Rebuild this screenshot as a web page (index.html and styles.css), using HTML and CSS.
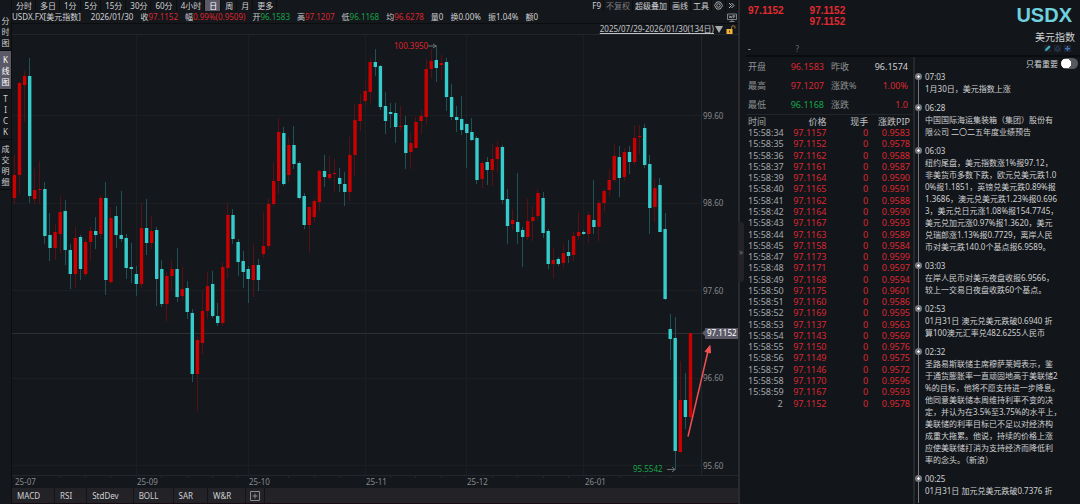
FILE: index.html
```html
<!DOCTYPE html>
<html lang="zh-CN">
<head>
    <meta charset="UTF-8">
    <meta name="viewport" content="width=device-width, initial-scale=1.0">
    <title>USDX 美元指数</title>
    <link rel="stylesheet" href="styles.css">
</head>
<body>
<div class="terminal">

    <nav class="sidebar">
        <button type="button">分<br>时<br>图</button>
        <button type="button" class="active">K<br>线<br>图</button>
        <button type="button">T<br>I<br>C<br>K</button>
        <button type="button">成<br>交<br>明<br>细</button>
    </nav>

    <main class="main">
        <div class="toolbar">
            <div class="periods">
                <button type="button">分时</button>
                <button type="button">多日</button>
                <button type="button">1分</button>
                <button type="button">5分</button>
                <button type="button">15分</button>
                <button type="button">30分</button>
                <button type="button">60分</button>
                <button type="button">4小时</button>
                <button type="button" class="active">日</button>
                <button type="button">周</button>
                <button type="button">月</button>
                <button type="button">更多</button>
            </div>
            <div class="tools">
                <button type="button">F9</button>
                <button type="button" class="muted">不复权</button>
                <button type="button">超级叠加</button>
                <button type="button">画线</button>
                <button type="button">工具</button>
                <button type="button" class="icon" aria-label="设置">
                    <svg width="9" height="9" viewBox="0 0 18 18" fill="none" stroke="#b4b4b6" stroke-width="1.8"><path d="M5.5 2h7L17 9l-4.5 7h-7L1 9z"/><circle cx="9" cy="9" r="3.5"/></svg>
                </button>
                <button type="button" class="icon" aria-label="展开">
                    <svg width="7" height="7" viewBox="0 0 14 14" fill="none" stroke="#c8c8ca" stroke-width="1.8"><path d="M2 2l5 5-5 5M7 2l5 5-5 5"/></svg>
                </button>
            </div>
        </div>

        <div class="info">
            <span class="symbol">USDX.FX[美元指数]</span>
            <span class="day">2026/01/30</span>
            <span>收<b class="red">97.1152</b></span>
            <span>幅<b class="red">0.99%(0.9509)</b></span>
            <span>开<b class="green">96.1583</b></span>
            <span>高<b class="red">97.1207</b></span>
            <span>低<b class="green">96.1168</b></span>
            <span>均<b class="red">96.6278</b></span>
            <span>量0</span>
            <span>换0.00%</span>
            <span>振1.04%</span>
            <span>额0</span>
            <svg class="monitor" width="10" height="9" viewBox="0 0 20 18" fill="none" stroke="#a5a5a8" stroke-width="1.5"><path d="M1 2h18v11H1zM10 13v3M5 17h10M4 5l2 5 1.500-4L9 10l1.500-5M12.500 11V5h3v3h-3"/></svg>
        </div>

        <div class="range">
            <a href="#">2025/07/29-2026/01/30(134日)</a>
            <svg width="8" height="7" viewBox="0 0 8 7"><path d="M0 0h8L4 7z" fill="#a9a9ab"/></svg>
            <svg class="lock" width="10" height="9" viewBox="0 0 20 18"><path d="M1 8h12v10H1z" fill="#f0b43c"/><path d="M11 8V5a3.500 3.500 0 0 1 7 0v2" fill="none" stroke="#c08c32" stroke-width="1.8"/><path d="M7 11v4" stroke="#5c3d0c" stroke-width="2"/></svg>
        </div>

        <svg class="chart" id="chart" viewBox="12 34 726 454" role="img" aria-label="美元指数日K线">
            <g class="grid">
                <path d="M136.500 35V475M248.500 35V475M365.500 35V475M466.500 35V475M583.500 35V475"/>
                <path d="M12 115.500H701M12 203.500H701M12 290.500H701M12 378.500H701M12 465.500H701"/>
            </g>
            <path class="frame" d="M12 34.500H738M701.500 35V475M12 475.500H738"/>
            <path class="frame" d="M14.500 476v2M59.500 476v2M85.500 476v2M110.500 476v2M161.500 476v2M187.500 476v2M212.500 476v2M237.500 476v2M288.500 476v2M314.500 476v2M339.500 476v2M390.500 476v2M415.500 476v2M441.500 476v2M492.500 476v2M517.500 476v2M543.500 476v2M568.500 476v2M619.500 476v2M644.500 476v2M670.500 476v2"/>
            <path class="last" d="M12 333.500H704"/>
            <g id="candles"></g>

            <g class="axis">
                <text x="703" y="119">99.60</text>
                <text x="703" y="206">98.60</text>
                <text x="703" y="294">97.60</text>
                <text x="703" y="381">96.60</text>
                <text x="703" y="469">95.60</text>
                <text x="15" y="485">25-07</text>
                <text x="137" y="485">25-09</text>
                <text x="249" y="485">25-10</text>
                <text x="366" y="485">25-11</text>
                <text x="467" y="485">25-12</text>
                <text x="585" y="485">26-01</text>
            </g>

            <text class="high" x="394" y="49">100.3950</text>
            <path class="pointer" d="M428 46h8M433 44l3 2-3 2"/>
            <text class="low" x="633" y="472">95.5542</text>
            <path class="pointer" d="M667 469.500h8M672 467l3 2.500-3 2.500"/>

            <path class="tag" d="M702 333l3-3v-2h33v11h-33v-3z"/>
            <text class="tag-text" x="707" y="336">97.1152</text>

            <path class="arrow" d="M688 436.500L708.500 349"/>
            <path class="arrow-head" d="M710 345.500l.5 7.500-5.500-1.500z"/>
        </svg>

        <div class="indicators">
            <button type="button">MACD</button>
            <button type="button">RSI</button>
            <button type="button">StdDev</button>
            <button type="button">BOLL</button>
            <button type="button">SAR</button>
            <button type="button">W&amp;R</button>
            <button type="button" class="add" aria-label="添加指标">
                <svg width="10" height="10" viewBox="0 0 10 10" fill="none" stroke="#8c8c90"><path d="M.5.5h9v9h-9zM5 2.500v5M2.500 5h5"/></svg>
            </button>
        </div>
    </main>

    <aside class="side">
        <button type="button" class="handle" aria-label="收起">»</button>
        <header class="head">
            <div class="prices">
                <strong>97.1152</strong>
                <strong>97.1152<br>97.1152</strong>
            </div>
            <div class="name">
                <h1>USDX</h1>
                <h2>美元指数</h2>
                <div class="marks">
                    <svg width="7" height="7" viewBox="0 0 14 14"><path d="M0 0h14v14H0z" fill="#1d2429"/><path d="M2 12l1-4 7-7 3 3-7 7z" fill="#3fb4cb"/></svg>
                    <svg width="7" height="7" viewBox="0 0 14 14" fill="none" stroke="#34527e" stroke-width="1.5"><path d="M1 1h12v12H1z" stroke="#252b33"/><path d="M3 10c2-2 0-7 4-7s2 5 4 7zM6 12h2"/></svg>
                    <svg width="7" height="7" viewBox="0 0 14 14"><path d="M0 0h14v14H0z" fill="#1c2533"/><path d="M7 2v10M2 7h10" stroke="#3f73bd" stroke-width="2.500"/></svg>
                </div>
            </div>
            <div class="hint"><span>-</span><span class="q">?</span></div>
        </header>

        <div class="columns">
            <section class="quotes">
                <dl class="summary">
                    <dt>开盘</dt><dd class="red">96.1583</dd><dt>昨收</dt><dd>96.1574</dd>
                    <dt>最高</dt><dd class="red">97.1207</dd><dt>涨跌%</dt><dd class="red">1.00%</dd>
                    <dt>最低</dt><dd class="green">96.1168</dd><dt>涨跌</dt><dd class="red">1.0</dd>
                </dl>
                <table class="ticks">
                    <thead>
                        <tr><th>时间</th><th>价格</th><th>现手</th><th>涨跌PIP</th></tr>
                    </thead>
                    <tbody>
                        <tr><td>15:58:34</td><td>97.1157</td><td>0</td><td>0.9583</td></tr>
                        <tr><td>15:58:35</td><td>97.1152</td><td>0</td><td>0.9578</td></tr>
                        <tr><td>15:58:36</td><td>97.1162</td><td>0</td><td>0.9588</td></tr>
                        <tr><td>15:58:37</td><td>97.1161</td><td>0</td><td>0.9587</td></tr>
                        <tr><td>15:58:39</td><td>97.1164</td><td>0</td><td>0.9590</td></tr>
                        <tr><td>15:58:40</td><td>97.1165</td><td>0</td><td>0.9591</td></tr>
                        <tr><td>15:58:41</td><td>97.1162</td><td>0</td><td>0.9588</td></tr>
                        <tr><td>15:58:42</td><td>97.1164</td><td>0</td><td>0.9590</td></tr>
                        <tr><td>15:58:43</td><td>97.1167</td><td>0</td><td>0.9593</td></tr>
                        <tr><td>15:58:44</td><td>97.1163</td><td>0</td><td>0.9589</td></tr>
                        <tr><td>15:58:45</td><td>97.1158</td><td>0</td><td>0.9584</td></tr>
                        <tr><td>15:58:47</td><td>97.1173</td><td>0</td><td>0.9599</td></tr>
                        <tr><td>15:58:48</td><td>97.1171</td><td>0</td><td>0.9597</td></tr>
                        <tr><td>15:58:49</td><td>97.1168</td><td>0</td><td>0.9594</td></tr>
                        <tr><td>15:58:50</td><td>97.1175</td><td>0</td><td>0.9601</td></tr>
                        <tr><td>15:58:51</td><td>97.1160</td><td>0</td><td>0.9586</td></tr>
                        <tr><td>15:58:52</td><td>97.1169</td><td>0</td><td>0.9595</td></tr>
                        <tr><td>15:58:53</td><td>97.1137</td><td>0</td><td>0.9563</td></tr>
                        <tr><td>15:58:54</td><td>97.1143</td><td>0</td><td>0.9569</td></tr>
                        <tr><td>15:58:55</td><td>97.1150</td><td>0</td><td>0.9576</td></tr>
                        <tr><td>15:58:56</td><td>97.1149</td><td>0</td><td>0.9575</td></tr>
                        <tr><td>15:58:57</td><td>97.1146</td><td>0</td><td>0.9572</td></tr>
                        <tr><td>15:58:58</td><td>97.1170</td><td>0</td><td>0.9596</td></tr>
                        <tr><td>15:58:59</td><td>97.1167</td><td>0</td><td>0.9593</td></tr>
                        <tr><td class="count">2</td><td>97.1152</td><td>0</td><td>0.9578</td></tr>
                    </tbody>
                </table>
            </section>

            <section class="news">
                <label class="filter">只看重要 <input type="checkbox"></label>
                <ol>
                    <li><time>07:03</time><p>1月30日，美元指数上涨</p></li>
                    <li><time>06:28</time><p>中国国际海运集装箱（集团）股份有<br>限公司 二〇二五年度业绩预告</p></li>
                    <li><time>06:03</time><p>纽约尾盘，美元指数涨1%报97.12，<br>非美货币多数下跌，欧元兑美元跌1.0<br>0%报1.1851，英镑兑美元跌0.89%报<br>1.3686，澳元兑美元跌1.23%报0.696<br>3，美元兑日元涨1.08%报154.7745，<br>美元兑加元涨0.97%报1.3620，美元<br>兑瑞郎涨1.13%报0.7729，离岸人民<br>币对美元跌140.0个基点报6.9589。</p></li>
                    <li><time>03:03</time><p>在岸人民币对美元夜盘收报6.9566，<br>较上一交易日夜盘收跌60个基点。</p></li>
                    <li><time>02:53</time><p>01月31日 澳元兑美元跌破0.6940 折<br>算100澳元汇率兑482.6255人民币</p></li>
                    <li><time>02:32</time><p>圣路易斯联储主席穆萨莱姆表示，鉴<br>于通货膨胀率一直顽固地高于美联储2<br>%的目标，他将不愿支持进一步降息。<br>他同意美联储本周维持利率不变的决<br>定，并认为在3.5%至3.75%的水平上，<br>美联储的利率目标已不足以对经济构<br>成重大拖累。他说，持续的价格上涨<br>应使美联储打消为支持经济而降低利<br>率的念头。（新浪）</p></li>
                    <li><time>00:25</time><p>01月31日 加元兑美元跌破0.7376 折</p></li>
                </ol>
            </section>
        </div>
    </aside>
</div>
<script src="chart.js"></script>
</body>
</html>
```
FILE: styles.css
```css
*, *::before {
    box-sizing: border-box;
}
body {
    margin: 0;
    background: #14171b;
    color: #cfd0d2;
    font-family: "Noto Sans", "Noto Sans CJK SC", sans-serif;
    font-size: 8px;
    line-height: 12px;
}
button {
    margin: 0;
    padding: 0;
    border: 0;
    background: none;
    color: inherit;
    font: inherit;
    cursor: pointer;
}
h1, h2, p, ol, dl, dd {
    margin: 0;
    padding: 0;
}
b {
    font-weight: normal;
}
.red {
    color: #dc2630;
}
.green {
    color: #17a34a;
}
.terminal {
    display: flex;
    height: 100vh;
    overflow: hidden;
}

/* left tabs */
.sidebar {
    flex: none;
    width: 12px;
    padding-top: 12px;
    border-right: 1px solid #0b0d0f;
}
.sidebar button {
    display: block;
    width: 100%;
    padding: 3px 0 2px;
    border-bottom: 1px solid #090b0d;
    line-height: 11px;
    text-align: center;
}
.sidebar .active {
    background: #5b5967;
    color: #fff;
}

/* chart column */
.main {
    flex: 1;
    min-width: 0;
    display: flex;
    flex-direction: column;
}
.toolbar {
    display: flex;
    justify-content: space-between;
    height: 11px;
    line-height: 11px;
}
.periods, .tools {
    display: flex;
}
.periods button, .tools button {
    padding: 0 3px 0 4px;
    border-right: 1px solid #0b0d0f;
    white-space: nowrap;
}
.periods .active {
    background: #5b5967;
    color: #fff;
}
.tools button {
    padding: 0 2px;
}
.tools .muted {
    color: #7d7e81;
}
.tools .icon {
    display: flex;
    align-items: center;
    padding: 0 2px;
}
.info {
    display: flex;
    gap: 7px;
    height: 13px;
    border-bottom: 1px solid #0b0d0f;
    white-space: nowrap;
}
.day {
    margin-left: 3px;
}
.monitor {
    margin: 2px 1px 0 auto;
}
.range {
    display: flex;
    align-items: center;
    justify-content: flex-end;
    gap: 1px;
    height: 10px;
    padding-right: 2px;
}
.range a {
    color: #c3c4c6;
}
.range .lock {
    margin-left: 2px;
}
.chart {
    flex: 1;
    display: block;
    width: 100%;
    min-height: 0;
}
.chart text {
    font-size: 8px;
}
.grid {
    stroke: #1b1f23;
    fill: none;
}
.frame {
    stroke: #23272b;
    fill: none;
}
.last {
    stroke: #2c3031;
}
.axis {
    fill: #87898c;
}
.high {
    fill: #dc2630;
}
.low {
    fill: #17a34a;
}
.pointer {
    stroke: #6e7174;
    fill: none;
}
.tag {
    fill: #5b5967;
}
.tag-text {
    fill: #fff;
}
.arrow {
    stroke: #f25050;
    stroke-width: 1.5;
}
.arrow-head {
    fill: #f25050;
    stroke: #f25050;
}
.up .body {
    fill: #cb0000;
}
.up .wick {
    fill: #5a1013;
}
.down .body {
    fill: #36cccb;
}
.down .wick {
    fill: #1e5254;
}
.indicators {
    display: flex;
    height: 16px;
    background: #222227;
    border-bottom: 1px solid #150d12;
}
.indicators button {
    padding: 0 14px 0 5px;
    border-right: 1px solid #141418;
    line-height: 15px;
}
.indicators .add {
    display: flex;
    align-items: center;
    padding: 0 4px;
}

/* right column */
.side {
    position: relative;
    flex: none;
    width: 342px;
    display: flex;
    flex-direction: column;
    border-left: 2px solid #2b2a2e;
    background: #12161a;
}
.handle {
    position: absolute;
    left: -2px;
    top: 222px;
    width: 6px;
    height: 60px;
    border-radius: 0 3px 3px 0;
    background: #222227;
    color: #77787b;
}
.head {
    display: grid;
    grid-template-columns: 1fr auto;
    height: 57px;
    margin-left: 6px;
    padding: 5px 5px 0 2px;
    border-bottom: 2px solid #0a0c0e;
}
.prices {
    display: flex;
    gap: 26px;
    color: #e02a30;
    font: bold 10px/11px "Liberation Sans", Arial, sans-serif;
}
.name {
    grid-row: span 2;
    text-align: right;
}
.name h1 {
    margin-right: 3px;
    color: #6fd0df;
    font: bold 20px/20px "Liberation Sans", Arial, sans-serif;
}
.name h2 {
    margin-top: 5px;
    font-size: 10px;
    font-weight: normal;
    line-height: 14px;
}
.marks {
    display: flex;
    justify-content: flex-end;
    gap: 3px;
    margin: 0 4px;
    padding-top: 1px;
}
.hint {
    display: flex;
    gap: 45px;
    align-self: end;
}
.q {
    color: #6c6e71;
}
.columns {
    flex: 1;
    min-height: 0;
    display: flex;
}
.quotes {
    width: 173px;
    padding-left: 6px;
}
.summary {
    display: grid;
    grid-template-columns: 24px 52px 40px 1fr;
    padding: 1px 5px 0 2px;
    border-bottom: 1px solid #22262a;
    font-size: 9px;
    line-height: 18px;
    row-gap: 1px;
}
.summary dt {
    color: #8f9194;
}
.summary dt:nth-of-type(even) {
    padding-left: 7px;
}
.summary dd {
    text-align: right;
}
.ticks {
    width: 100%;
    height: 294px;
    border-collapse: collapse;
    table-layout: fixed;
    font-size: 9px;
    line-height: 11px;
}
.ticks th, .ticks td {
    padding: 0 3px 0 0;
    color: #dc2630;
    font-weight: normal;
    text-align: right;
}
.ticks th {
    height: 12px;
    padding-top: 1px;
    color: #c3c4c6;
}
.ticks th:first-child, .ticks td:first-child {
    padding-left: 2px;
    color: #a5a7aa;
    text-align: left;
}
.ticks .count:first-child {
    padding-right: 5px;
    text-align: right;
}
.news {
    flex: 1;
    min-width: 0;
    padding-left: 3px;
    border-left: 2px solid #25282c;
    overflow: hidden;
}
.filter {
    display: flex;
    align-items: center;
    justify-content: flex-end;
    gap: 3px;
    height: 13px;
    padding-right: 2px;
}
.filter input {
    appearance: none;
    width: 17px;
    height: 11px;
    margin: 0;
    border-radius: 6px;
    background: radial-gradient(circle at 5px 50%, #fff 5px, #58595c 5px);
}
.news ol {
    list-style: none;
}
.news li {
    position: relative;
    padding: 1px 0 6px 6px;
    border-left: 1px solid #75777a;
}
.news li:first-child {
    border-image: linear-gradient(transparent 7px, #75777a 7px) 1;
}
/* timeline dot */
.news li::before {
    content: "";
    position: absolute;
    left: -4px;
    top: 3px;
    width: 7px;
    height: 7px;
    border: 2px solid #77797c;
    border-radius: 50%;
    background: #fff;
    background-clip: padding-box;
}
.news time {
    display: block;
}
.news p {
    white-space: nowrap;
}
```
FILE: chart.js
```js
// [direction, high, body top, body bottom, low], one row per trading day
const candles = [
    ['u', 155, 175, 198, 204], ['u', 82, 83, 175, 194], ['u', 71, 76, 85, 122], ['d', 58, 76, 196, 203],
    ['u', 169, 190, 199, 204], ['u', 161, 189, 190, 204], ['d', 182, 189, 236, 244], ['d', 213, 235, 248, 261],
    ['u', 224, 232, 248, 260], ['u', 196, 212, 234, 253], ['d', 200, 211, 250, 265], ['d', 244, 250, 274, 289],
    ['u', 227, 238, 274, 288], ['d', 235, 237, 269, 280], ['u', 239, 242, 274, 276], ['u', 227, 231, 242, 261],
    ['d', 217, 231, 235, 249], ['u', 195, 198, 234, 239], ['d', 182, 198, 280, 295], ['u', 207, 218, 282, 284],
    ['d', 206, 216, 235, 248], ['d', 191, 235, 239, 242], ['d', 234, 238, 268, 279], ['d', 243, 267, 269, 283],
    ['d', 266, 274, 284, 296], ['u', 203, 228, 284, 288], ['d', 199, 228, 243, 255], ['u', 216, 231, 243, 249],
    ['d', 227, 230, 279, 306], ['d', 260, 269, 304, 307], ['u', 272, 276, 304, 321], ['u', 260, 269, 276, 291],
    ['d', 248, 269, 297, 302], ['u', 267, 289, 296, 300], ['d', 281, 288, 312, 319], ['d', 309, 313, 374, 382],
    ['u', 337, 340, 374, 411], ['u', 290, 311, 343, 354], ['u', 272, 286, 311, 319], ['d', 271, 284, 316, 318],
    ['d', 303, 316, 323, 326], ['u', 262, 267, 323, 326], ['u', 203, 215, 268, 278], ['d', 209, 215, 239, 244],
    ['d', 239, 242, 262, 276], ['d', 251, 261, 272, 288], ['d', 266, 269, 279, 303], ['u', 244, 265, 280, 297],
    ['d', 259, 265, 280, 291], ['u', 212, 246, 254, 258], ['u', 198, 204, 246, 249], ['u', 163, 181, 204, 206],
    ['u', 118, 132, 181, 194], ['d', 127, 133, 184, 186], ['u', 137, 145, 175, 182], ['d', 126, 145, 164, 169],
    ['d', 161, 163, 198, 199], ['d', 193, 196, 225, 229], ['u', 207, 207, 225, 253], ['u', 199, 201, 217, 222],
    ['u', 170, 171, 202, 211], ['d', 155, 171, 177, 187], ['u', 156, 174, 178, 180], ['u', 159, 173, 174, 192],
    ['d', 168, 178, 184, 192], ['d', 172, 184, 192, 206], ['u', 137, 155, 192, 201], ['u', 104, 120, 155, 176],
    ['u', 94, 104, 121, 131], ['u', 81, 91, 101, 106], ['u', 58, 62, 92, 103], ['d', 49, 62, 67, 76],
    ['d', 65, 66, 107, 110], ['d', 92, 106, 121, 134], ['d', 103, 112, 114, 128], ['d', 103, 113, 127, 143],
    ['u', 106, 126, 127, 131], ['d', 116, 125, 153, 169], ['u', 133, 143, 152, 169], ['u', 117, 122, 148, 148],
    ['u', 110, 116, 121, 134], ['u', 59, 69, 117, 125], ['u', 49, 61, 69, 78], ['d', 45, 60, 68, 82],
    ['u', 55, 63, 65, 80], ['d', 58, 62, 97, 111], ['d', 84, 97, 117, 120], ['d', 106, 117, 120, 132],
    ['d', 96, 119, 130, 135], ['d', 123, 124, 133, 168], ['d', 118, 132, 140, 141], ['d', 136, 138, 180, 184],
    ['u', 161, 163, 179, 188], ['d', 157, 162, 170, 185], ['u', 144, 159, 170, 186], ['u', 141, 147, 159, 172],
    ['d', 145, 147, 200, 204], ['d', 189, 199, 226, 244], ['u', 209, 220, 224, 230], ['d', 173, 222, 232, 244],
    ['d', 227, 230, 237, 267], ['u', 199, 221, 237, 240], ['u', 206, 217, 221, 241], ['u', 189, 193, 216, 220],
    ['d', 192, 198, 233, 238], ['d', 229, 231, 264, 269], ['u', 248, 260, 264, 278], ['d', 257, 259, 264, 266],
    ['u', 244, 253, 263, 268], ['d', 240, 252, 256, 263], ['u', 232, 236, 255, 261], ['u', 212, 232, 236, 240],
    ['d', 230, 232, 234, 235], ['u', 212, 215, 234, 243], ['d', 180, 220, 227, 234], ['u', 200, 203, 227, 241],
    ['u', 189, 191, 203, 212], ['u', 169, 180, 190, 196], ['u', 144, 156, 180, 182], ['d', 146, 157, 178, 197],
    ['u', 148, 152, 177, 181], ['d', 146, 152, 162, 174], ['u', 125, 138, 162, 165], ['u', 125, 136, 137, 154],
    ['d', 124, 128, 165, 168], ['d', 155, 164, 208, 234], ['u', 179, 188, 207, 222], ['d', 178, 185, 232, 232],
    ['d', 213, 229, 299, 300], ['d', 314, 329, 339, 360], ['d', 317, 338, 451, 470], ['u', 361, 400, 452, 453],
    ['d', 373, 400, 417, 429], ['u', 333, 333, 417, 420]
];

const firstX = 14.4;
const lastX = 690.5;
const step = (lastX - firstX) / (candles.length - 1);
const svgNs = 'http://www.w3.org/2000/svg';
const layer = document.getElementById('candles');

function addRect(parent, name, x, y, width, height) {
    const rect = document.createElementNS(svgNs, 'rect');
    rect.setAttribute('class', name);
    rect.setAttribute('x', x);
    rect.setAttribute('y', y);
    rect.setAttribute('width', width);
    rect.setAttribute('height', height);
    parent.appendChild(rect);
}

candles.forEach(([direction, high, top, bottom, low], i) => {
    const x = firstX + i * step;
    const group = document.createElementNS(svgNs, 'g');
    group.setAttribute('class', direction === 'u' ? 'up' : 'down');
    addRect(group, 'wick', Math.floor(x), high, 1, low - high);
    addRect(group, 'body', (x - 1.7).toFixed(1), top, 3.4, bottom - top);
    layer.appendChild(group);
});
```
